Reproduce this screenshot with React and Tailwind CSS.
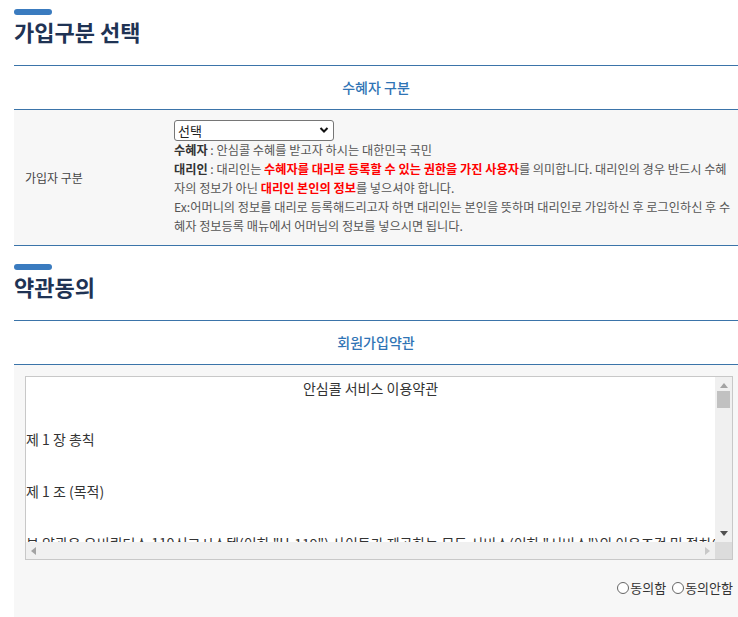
import { useState } from "react";

const FONT = { fontFamily: '"Noto Sans CJK KR", "Noto Sans", sans-serif' };

const SectionTitle = ({ children }) => (
  <div>
    <div className="h-[6px] w-[38px] rounded-full bg-[#3a7bbf]" />
    <h2 className="mt-px text-[22px] font-bold leading-[30px] text-[#1f3354]">
      {children}
    </h2>
  </div>
);

const TableHead = ({ children }) => (
  <div className="flex h-[45px] items-center justify-center border-y border-[#3b74a9] text-[14px] font-medium text-[#2f74b5]">
    {children}
  </div>
);

const Radio = ({ checked, onClick, label }) => (
  <label className="flex cursor-pointer items-center text-[13px] leading-[19px] text-[#333]" onClick={onClick}>
    <span className="mr-px flex h-[12px] w-[12px] items-center justify-center rounded-full border border-[#666] bg-white">
      {checked && <span className="h-[6px] w-[6px] rounded-full bg-[#333]" />}
    </span>
    {label}
  </label>
);

const App = () => {
  const [agree, setAgree] = useState(null);

  return (
    <div className="min-h-[617px] bg-white pl-[14px] text-[#555]" style={FONT}>
      {/* 가입구분 선택 */}
      <div className="pt-[9px]">
        <SectionTitle>가입구분 선택</SectionTitle>
      </div>

      <div className="mt-[19px]">
        <TableHead>수혜자 구분</TableHead>
        <div className="flex border-b border-[#3b74a9] bg-[#f7f7f7]">
          <div className="flex w-[160px] shrink-0 items-center pl-[11px] text-[12px] text-[#444]">
            가입자 구분
          </div>
          <div className="pb-[9px] pr-[4px] pt-[10px] text-[12.2px] leading-[19px] break-all">
            <div className="relative h-[21px] w-[160px]">
              <select className="h-[21px] w-[160px] appearance-none rounded-[3px] border border-[#767676] bg-white pl-[3px] text-[13px] leading-[19px] text-[#222]">
                <option>선택</option>
                <option>수혜자</option>
                <option>대리인</option>
              </select>
              <svg
                className="pointer-events-none absolute right-[5px] top-[6px]"
                width="10"
                height="8"
                viewBox="0 0 10 8"
              >
                <path d="M1.5 2 L5 5.5 L8.5 2" fill="none" stroke="#111" strokeWidth="2" />
              </svg>
            </div>
            <p>
              <b className="text-[#333]">수혜자</b> : 안심콜 수혜를 받고자 하시는 대한민국 국민
            </p>
            <p>
              <b className="text-[#333]">대리인</b> : 대리인는{" "}
              <b className="text-[#ff0000]">수혜자를 대리로 등록할 수 있는 권한을 가진 사용자</b>를
              의미합니다. 대리인의 경우 반드시 수혜자의 정보가 아닌{" "}
              <b className="text-[#ff0000]">대리인 본인의 정보</b>를 넣으셔야 합니다.
            </p>
            <p>
              Ex:어머니의 정보를 대리로 등록해드리고자 하면 대리인는 본인을 뜻하며 대리인로 가입하신 후
              로그인하신 후 수혜자 정보등록 매뉴에서 어머님의 정보를 넣으시면 됩니다.
            </p>
          </div>
        </div>
      </div>

      {/* 약관동의 */}
      <div className="pt-[18px]">
        <SectionTitle>약관동의</SectionTitle>
      </div>

      <div className="mt-[19px]">
        <TableHead>회원가입약관</TableHead>
        <div className="bg-[#f7f7f7] pb-[20px] pl-[11px] pr-[5px] pt-[11px]">
          <div className="flex h-[184px] flex-col border border-[#c8c8c8] bg-white">
            <div className="flex min-h-0 flex-1">
              <div className="min-w-0 flex-1 overflow-hidden whitespace-nowrap text-[14px] text-[#333]">
                <p className="text-center leading-[22px]">안심콜 서비스 이용약관</p>
                <p className="mt-[27px] leading-[26px]">제 1 장 총칙</p>
                <p className="mt-[26px] leading-[26px]">제 1 조 (목적)</p>
                <p className="mt-[26px] leading-[26px]">
                  본 약관은 유비쿼터스 119신고시스템(이하 "U-119") 사이트가 제공하는 모든 서비스(이하 "서비스")의 이용조건 및 절차에 관한 사항을 규정함을 목적으로 합니다.
                </p>
              </div>
              {/* vertical scrollbar */}
              <div className="flex w-[17px] shrink-0 flex-col items-center bg-[#f0f0f0]">
                <svg className="mt-[6px]" width="8" height="5" viewBox="0 0 8 5">
                  <path d="M0 5 L4 0 L8 5 Z" fill="#a3a3a3" />
                </svg>
                <div className="mt-[3px] h-[17px] w-[13px] bg-[#c1c1c1]" />
                <div className="flex-1" />
                <svg className="mb-[6px]" width="8" height="5" viewBox="0 0 8 5">
                  <path d="M0 0 L8 0 L4 5 Z" fill="#505050" />
                </svg>
              </div>
            </div>
            {/* horizontal scrollbar */}
            <div className="flex h-[17px] shrink-0">
              <div className="flex flex-1 items-center justify-between bg-[#f0f0f0] px-[5px]">
                <svg width="5" height="8" viewBox="0 0 5 8">
                  <path d="M5 0 L0 4 L5 8 Z" fill="#a3a3a3" />
                </svg>
                <svg width="5" height="8" viewBox="0 0 5 8">
                  <path d="M0 0 L5 4 L0 8 Z" fill="#c8c8c8" />
                </svg>
              </div>
              <div className="w-[17px] bg-[#dcdcdc]" />
            </div>
          </div>
          <div className="mt-[18px] flex justify-end gap-[6px]">
            <Radio label="동의함" checked={agree === true} onClick={() => setAgree(true)} />
            <Radio label="동의안함" checked={agree === false} onClick={() => setAgree(false)} />
          </div>
        </div>
      </div>
    </div>
  );
};

export default App;
